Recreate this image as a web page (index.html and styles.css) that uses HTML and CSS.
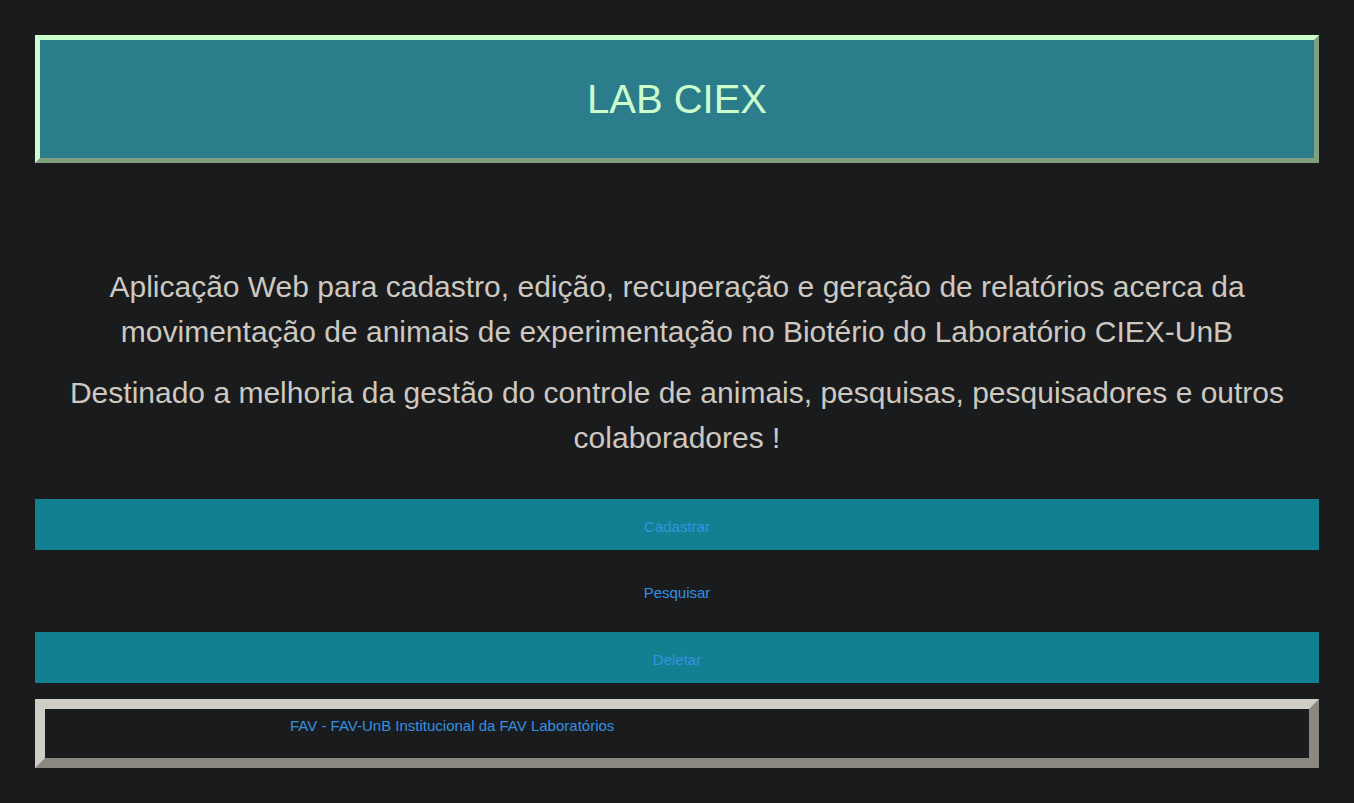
FILE: index.html
```html
<!DOCTYPE html>
<html lang="pt-BR">
<head>
<meta charset="utf-8">
<title>LAB CIEX</title>
<link rel="stylesheet" href="styles.css">
</head>
<body>
<div class="page">
  <header class="header">
    <h1 class="title">LAB CIEX</h1>
  </header>
  <main class="main">
    <section class="intro">
      <p class="lead">Aplicação Web para cadastro, edição, recuperação e geração de relatórios acerca da movimentação de animais de experimentação no Biotério do Laboratório CIEX-UnB</p>
      <p class="lead">Destinado a melhoria da gestão do controle de animais, pesquisas, pesquisadores e outros colaboradores !</p>
    </section>
    <nav class="menu">
      <a class="menu-item alt" href="#">Cadastrar</a>
      <a class="menu-item" href="#">Pesquisar</a>
      <a class="menu-item alt" href="#">Deletar</a>
    </nav>
  </main>
  <footer class="footer">
    <a class="footer-link" href="#">FAV - FAV-UnB Institucional da FAV Laboratórios</a>
  </footer>
</div>
</body>
</html>
```
FILE: styles.css
```css
html, body {
  margin: 0;
  padding: 0;
  background: #1a1b1d;
}
body {
  font-family: "Liberation Sans", Arial, sans-serif;
}
.page {
  padding: 35px;
  display: flex;
  flex-direction: column;
}
.header {
  background: #2c7d8c;
  border-style: solid;
  border-width: 5px;
  border-color: #ccffcc #7f9f7f #7f9f7f #ccffcc;
  height: 118px;
  display: flex;
  align-items: center;
  justify-content: center;
}
.title {
  margin: 0;
  font-size: 40px;
  font-weight: normal;
  line-height: 46px;
  color: #ccffcc;
}
.main {
  display: flex;
  flex-direction: column;
  padding-top: 101px;
}
.intro {
  display: flex;
  flex-direction: column;
  gap: 16px;
  margin-bottom: 39px;
}
.lead {
  margin: 0;
  font-size: 30px;
  line-height: 45px;
  text-align: center;
  color: #cdc8c0;
}
.menu {
  display: flex;
  flex-direction: column;
  gap: 15.5px;
  margin-bottom: 16px;
}
.menu-item {
  display: flex;
  align-items: center;
  justify-content: center;
  height: 51px;
  padding-top: 3px;
  box-sizing: border-box;
  font-size: 15px;
  color: #3391e0;
  text-decoration: none;
}
.menu-item.alt {
  background: #138091;
}
.footer {
  border-style: solid;
  border-width: 10px;
  border-color: #d0cdc6 #8b8882 #8b8882 #d0cdc6;
  height: 41px;
  padding: 8px 0 0 245px;
  box-sizing: content-box;
}
.footer-link {
  font-size: 15px;
  color: #3391e0;
  text-decoration: none;
  line-height: 17px;
}
```
